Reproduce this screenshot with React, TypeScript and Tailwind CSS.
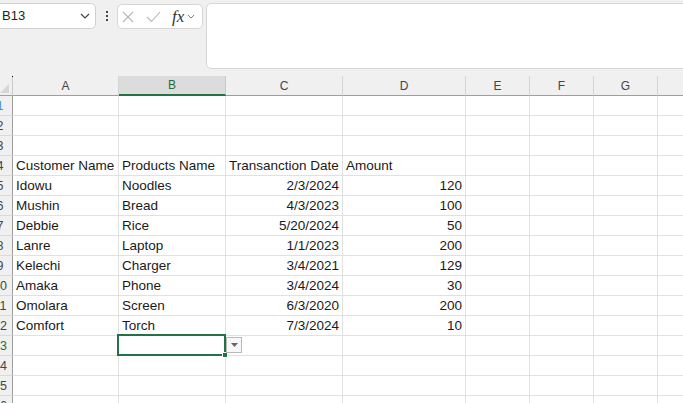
import React from "react";

const cols = [
  { key: "A", w: "w-[106px]" },
  { key: "B", w: "w-[107px]" },
  { key: "C", w: "w-[117px]" },
  { key: "D", w: "w-[123px]" },
  { key: "E", w: "w-[64px]" },
  { key: "F", w: "w-[64px]" },
  { key: "G", w: "w-[64px]" },
  { key: "H", w: "w-[80px]" },
];

type Cell = { t: string; right?: boolean };

const data: Record<number, Cell[]> = {
  4: [{ t: "Customer Name" }, { t: "Products Name" }, { t: "Transanction Date" }, { t: "Amount" }],
  5: [{ t: "Idowu" }, { t: "Noodles" }, { t: "2/3/2024", right: true }, { t: "120", right: true }],
  6: [{ t: "Mushin" }, { t: "Bread" }, { t: "4/3/2023", right: true }, { t: "100", right: true }],
  7: [{ t: "Debbie" }, { t: "Rice" }, { t: "5/20/2024", right: true }, { t: "50", right: true }],
  8: [{ t: "Lanre" }, { t: "Laptop" }, { t: "1/1/2023", right: true }, { t: "200", right: true }],
  9: [{ t: "Kelechi" }, { t: "Charger" }, { t: "3/4/2021", right: true }, { t: "129", right: true }],
  10: [{ t: "Amaka" }, { t: "Phone" }, { t: "3/4/2024", right: true }, { t: "30", right: true }],
  11: [{ t: "Omolara" }, { t: "Screen" }, { t: "6/3/2020", right: true }, { t: "200", right: true }],
  12: [{ t: "Comfort" }, { t: "Torch" }, { t: "7/3/2024", right: true }, { t: "10", right: true }],
};

const rows = Array.from({ length: 16 }, (_, i) => i + 1);

function Chevron({ className }: { className?: string }) {
  return (
    <svg className={className} viewBox="0 0 10 6" fill="none" stroke="currentColor" strokeWidth={1.2}>
      <path d="M1 1l4 4 4-4" />
    </svg>
  );
}

export default function App() {
  return (
    <div className="w-[683px] h-[403px] overflow-hidden bg-white font-['Liberation_Sans',Arial,sans-serif] text-[#1a1a1a]">
      {/* top bar */}
      <div className="h-[76px] bg-[#f0f0f0] flex items-start pt-[3px]">
        <div className="ml-[-12px] w-[108px] h-[26px] shrink-0 bg-white border border-[#d1d1d1] rounded-[5px] flex items-center pl-[13px] pr-[5px] text-[13px] text-[#222]">
          <span className="flex-1">B13</span>
          <Chevron className="w-[10px] h-[6px] text-[#444]" />
        </div>
        <div className="w-[21px] h-[26px] shrink-0 flex flex-col items-center justify-center gap-[2px]">
          <span className="w-[2px] h-[2px] bg-[#444]" />
          <span className="w-[2px] h-[2px] bg-[#444]" />
          <span className="w-[2px] h-[2px] bg-[#444]" />
        </div>
        <div className="mt-[1px] w-[86px] h-[25px] shrink-0 bg-white border border-[#d6d6d6] rounded-[5px] flex items-center pl-[4px]">
          <svg className="w-[12px] h-[12px] text-[#b5b5b5]" viewBox="0 0 12 12" fill="none" stroke="currentColor" strokeWidth={1.1}>
            <path d="M1 1l10 10M11 1L1 11" />
          </svg>
          <svg className="ml-[12px] w-[15px] h-[12px] text-[#b5b5b5]" viewBox="0 0 15 12" fill="none" stroke="currentColor" strokeWidth={1.1}>
            <path d="M1 6l4.5 4.5L14 1" />
          </svg>
          <span className="ml-[11px] font-['Liberation_Serif',serif] italic text-[17px] text-[#333] leading-none">fx</span>
          <Chevron className="ml-[3px] w-[8px] h-[5px] text-[#777]" />
        </div>
        <div className="ml-[3px] flex-1 h-[66px] mr-[-10px] bg-white border border-[#d6d6d6] rounded-[5px]" />
      </div>

      {/* column header */}
      <div className="flex h-[20px] bg-[#f0f0f0]">
        <div className="w-[13px] shrink-0 relative border-r border-[#c8c8c8] border-b border-b-[#9e9e9e]">
          <span className="absolute right-[-1px] top-0 w-[1px] h-[1px] bg-black" />
          <svg className="absolute right-[3px] bottom-[2px] w-[9px] h-[9px]" viewBox="0 0 9 9">
            <path d="M9 0V9H0Z" fill="#d6d6d6" />
          </svg>
        </div>
        {cols.map((c) =>
          c.key === "B" ? (
            <div
              key={c.key}
              className={`${c.w} shrink-0 bg-[#dcdcdc] border-r border-[#c8c8c8] border-b-2 border-b-[#217346] flex items-center justify-center text-[12px] text-[#1e6b40]`}
            >
              {c.key}
            </div>
          ) : (
            <div
              key={c.key}
              className={`${c.w} shrink-0 border-r border-[#d4d4d4] border-b border-b-[#9e9e9e] flex items-center justify-center text-[12px] text-[#444]`}
            >
              {c.key}
            </div>
          )
        )}
      </div>

      {/* grid */}
      {rows.map((r) => (
        <div key={r} className="flex h-[20px]">
          <div className="w-[13px] shrink-0 overflow-hidden bg-[#f0f0f0] border-r border-[#9e9e9e] border-b border-b-[#dadada] flex">
            <div
              className={`w-[24px] shrink-0 ml-[-12px] text-center text-[12.5px] leading-[20px] ${
                r === 13 ? "text-[#1e6b40]" : r === 1 ? "text-[#3a8ee6]" : "text-[#444]"
              }`}
            >
              {r}
            </div>
          </div>
          {cols.map((c, ci) => {
            const cell = data[r]?.[ci];
            const selected = r === 13 && c.key === "B";
            return (
              <div
                key={c.key}
                className={`${c.w} shrink-0 border-r border-b border-[#e1e1e1] px-[3px] text-[13.5px] leading-[20px] whitespace-nowrap ${
                  cell?.right ? "text-right" : ""
                } ${selected ? "relative z-10" : ""}`}
              >
                {cell?.t}
                {selected && (
                  <>
                    <div className="absolute left-[-2px] top-[-2px] w-[109px] h-[22px] border-2 border-[#217346]" />
                    <div className="absolute left-[103px] top-[16px] w-[6px] h-[6px] bg-[#217346] border border-white" />
                    <div className="absolute left-[107px] top-[1px] w-[16px] h-[16px] bg-[#f7f7f7] border border-[#b9b9b9] flex items-center justify-center">
                      <svg className="w-[7px] h-[4px]" viewBox="0 0 7 4">
                        <path d="M0 0h7L3.5 4Z" fill="#666" />
                      </svg>
                    </div>
                  </>
                )}
              </div>
            );
          })}
        </div>
      ))}
    </div>
  );
}
